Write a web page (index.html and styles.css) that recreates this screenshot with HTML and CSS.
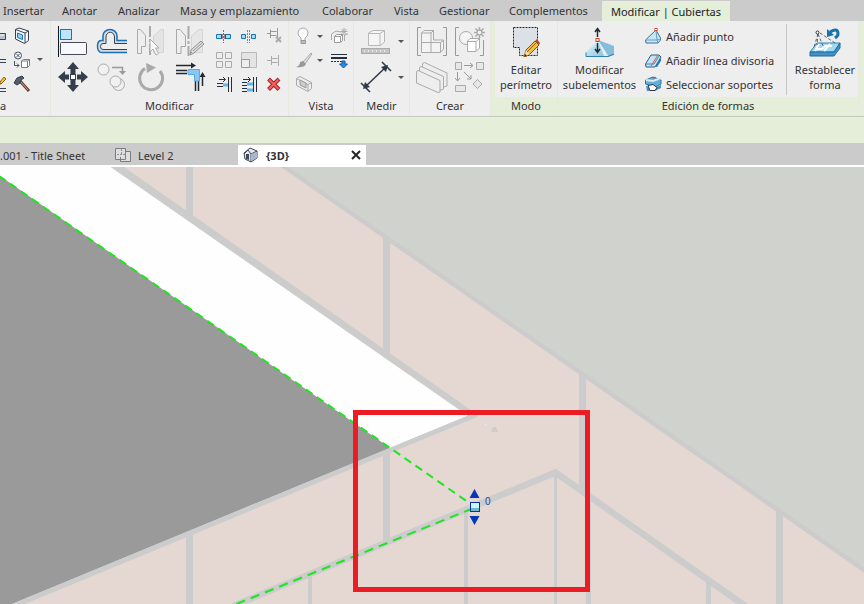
FILE: index.html
```html
<!DOCTYPE html>
<html lang="es">
<head>
<meta charset="utf-8">
<title>Modificar | Cubiertas</title>
<link rel="stylesheet" href="styles.css">
</head>
<body>
<nav class="tabs" aria-label="Cinta">
  <button>Insertar</button><button>Anotar</button><button>Analizar</button><button>Masa y emplazamiento</button><button>Colaborar</button><button>Vista</button><button>Gestionar</button><button>Complementos</button><button class="active">Modificar | Cubiertas</button>
</nav>

<div class="ribbon">
  <section class="panel geometry">
    <div class="tools">
      <div class="small edge">
        <button aria-label="Cortar"><svg viewBox="0 27 7 18"><path d="M0 33.500H5.500V39.500H0" fill="#b9c2ce" stroke="#3b4456"/><path d="M0 35H4" stroke="#fff"/></svg></button>
        <button aria-label="Juntas"><svg viewBox="0 51 7 18"><path d="M0 59.500H6M0 62.500H6" stroke="#39424f"/></svg></button>
        <button aria-label="Pintar"><svg viewBox="0 75 7 18"><path d="M0 82L4 77L6 79L1 84L0 84Z" fill="#ffc51f" stroke="#8a5a1b"/><path d="M0 88.500H6M0 91.500H6" stroke="#39424f"/></svg></button>
      </div>
      <div class="small">
        <button aria-label="Muro"><svg viewBox="14 27 18 18"><path d="M16.500 29.500L20 28L29.500 31V40.500L25.500 43.500L16.500 39Z" fill="#f8fafc" stroke="#354052"/><path d="M16.500 29.500L26 33L29.500 31M26 33V43" fill="none" stroke="#354052"/><path d="M18.500 33L23.500 35V39.500L18.500 37.500Z" fill="#8dd2fa" stroke="#1772b8"/></svg></button>
        <button aria-label="Unir geometría"><svg viewBox="14 51 18 18"><circle cx="19" cy="55.500" r="3.500" fill="#fff" stroke="#4a5261"/><path d="M17 53.500L21 57.500M21 53.500L17 57.500M15.500 61V65.500H20M18 63.500L20 65.500L18 67.500" fill="none" stroke="#4a5261"/><path d="M22.500 61L24.500 59.500H30.500V65.500L28.500 67.500H22.500ZM22.500 61H28.500V67M28.500 61L30.500 59.500" fill="#fff" stroke="#777d88"/></svg></button>
        <button aria-label="Demoler"><svg viewBox="14 75 18 18"><path d="M21 81L30 91" stroke="#673f32" stroke-width="3"/><path d="M21 81L29 90" stroke="#d9a083"/><path d="M15 83L18 78L23 76L25 78L22 80L21 83L18 85Z" fill="#56606c" stroke="#343d49"/></svg></button>
      </div>
      <button class="caret" aria-label="Más opciones de unión"></button>
    </div>
    <h2>a</h2>
  </section>

  <section class="panel modify">
    <div class="tools">
      <div class="large four">
        <button aria-label="Alinear"><svg viewBox="57 25 32 32"><path d="M58.500 26V57" stroke="#111820"/><rect x="60.500" y="29.500" width="11" height="10" fill="#bce5fb" stroke="#1b78ae"/><rect x="60.500" y="42.500" width="26" height="12" rx="1" fill="#f8f8fb" stroke="#454956"/></svg></button>
        <button aria-label="Desfase"><svg viewBox="96 25 32 32" fill="none"><path d="M127 42H116V36A5.500 5 0 0 0 104.500 36V42H102Q99 42 99 46Q99 51 102 51H127" stroke="#d5dce5" stroke-width="3"/><path d="M127 40.500H117V36A7 6.500 0 0 0 103 36V40.500H101Q97.500 41 97.500 46Q97.500 52.500 102 52.500H127" stroke="#1a70b8" stroke-width="1.500"/><path d="M127 43.500H114.500V37A4 4.500 0 0 0 106 37V43.500H103Q100.500 43.500 100.500 46.500Q100.500 49.500 103 49.500H127" stroke="#3a4048"/></svg></button>
        <button aria-label="Simetría por eje"><svg viewBox="135 25 32 32"><path d="M137.500 29.500H140.500L145.500 35.500V46.500H141.500V53.500H137.500Z" fill="#eee" stroke="#aaa"/><path d="M163.500 29.500H161L153.500 36V52.500H163.500Z" fill="#e4e4e4" stroke="#d4d4d4"/><path d="M150 26V56" stroke="#aaa" stroke-width="2" stroke-dasharray="11 2 3 2"/><path d="M150 39V52L153 49L156 55L158.500 53.500L155.500 48H159Z" fill="#fafafa" stroke="#aaa"/></svg></button>
        <button aria-label="Simetría: dibujar eje"><svg viewBox="174 25 32 32"><path d="M176.500 29.500H180L185.500 36V46.500H181V53.500H176.500Z" fill="#eee" stroke="#a7a7a7"/><path d="M202.500 29.500H199L191.500 36V52.500H202.500Z" fill="#e6e6e6" stroke="#d4d4d4"/><path d="M188.500 26V56" stroke="#aaa" stroke-width="2" stroke-dasharray="13 2 3 2"/><path d="M190 55L191 50L201 41L204 44L194 53Z" fill="#ddd" stroke="#909090"/><path d="M191 52L193 54M193 51L202 43" stroke="#999"/></svg></button>
        <button aria-label="Desplazar"><svg viewBox="57 61 32 32" fill="#353e4c"><path d="M73 62L79 69H75.500V74H70.500V69H67ZM73 92L79 85H75.500V80H70.500V85H67ZM58 77L65 71V74.500H69V79.500H65V83ZM88 77L81 71V74.500H77V79.500H81V83Z"/><rect x="70.500" y="74.500" width="5" height="5" fill="#fff" stroke="#353e4c"/></svg></button>
        <button aria-label="Copiar"><svg viewBox="96 61 32 32"><g fill="#f1f1f1" stroke="#aaa"><circle cx="103.500" cy="69.500" r="5.500"/><circle cx="118.500" cy="84.500" r="6"/><circle cx="115.500" cy="81.500" r="5.500"/></g><path d="M112 67.500H122.500V72" fill="none" stroke="#999" stroke-width="1.500"/><path d="M119 71H126L122.500 75Z" fill="#999"/></svg></button>
        <button aria-label="Rotar"><svg viewBox="135 61 32 32"><path d="M145 68.500A11.500 11.500 0 1 0 160 71" fill="none" stroke="#aaa" stroke-width="3"/><path d="M146 63L156 67.500L147 73Z" fill="#aaa"/></svg></button>
        <button aria-label="Recortar"><svg viewBox="174 61 32 32"><path d="M176 65.500H191M176 70.500H187M176 73.500H187M195.500 81V91M198.500 81V91M202.500 86V74" stroke="#222932" stroke-width="1.500"/><path d="M191 62.500L196 65.500L191 68.500ZM199.500 77L202.500 72L205.500 77Z" fill="#222932"/><path d="M188 69.500H199.500V81H194.500V74.500H188Z" fill="#88c8f3" stroke="#58a9df"/></svg></button>
      </div>
      <div class="small three">
        <button aria-label="Dividir"><svg viewBox="215 27 18 18"><path d="M216.500 34.500H221.500V38.500H216.500ZM225.500 34.500H230.500V38.500H225.500Z" fill="#a7dcf8" stroke="#1875b4"/><path d="M223.500 30V43" stroke="#cc4b42" stroke-dasharray="2 1"/><path d="M222 34V39M225 34V39" stroke="#51201e"/></svg></button>
        <button aria-label="Dividir con hueco"><svg viewBox="240 27 18 18"><path d="M241.500 34.500H245.500V38.500H241.500ZM251.500 34.500H255.500V38.500H251.500Z" fill="#a7dcf8" stroke="#1875b4"/><path d="M247.500 30V43M249.500 30V43" stroke="#cc6862" stroke-dasharray="2 1"/></svg></button>
        <button aria-label="Desbloquear"><svg viewBox="265 27 18 18"><path d="M267 33.500H270M270.500 29.500V38M270.500 31.500H276.500M270.500 35.500H276.500M277.500 28V38" fill="none" stroke="#999"/><path d="M276 37L281 42M281 37L276 42" stroke="#aaa" stroke-width="2"/></svg></button>
        <button aria-label="Matriz"><svg viewBox="215 51 18 18"><path d="M216.500 52.500H222.500V58.500H216.500ZM225.500 52.500H231.500V58.500H225.500ZM216.500 61.500H222.500V67.500H216.500ZM225.500 61.500H231.500V67.500H225.500Z" fill="#eee" stroke="#aaa"/></svg></button>
        <button aria-label="Escala"><svg viewBox="240 51 18 18"><path d="M241.500 52.500H256.500V67.500H241.500Z" fill="#e4e4e4" stroke="#b8b8b8"/><path d="M241.500 59.500H249.500V67.500H241.500Z" fill="#eee" stroke="#999"/></svg></button>
        <button aria-label="Bloquear"><svg viewBox="265 51 18 18"><path d="M267 60.500H271M271.500 56V65M271.500 58.500H277.500M271.500 62.500H277.500M278.500 55V66" fill="none" stroke="#aaa"/></svg></button>
        <button aria-label="Alargar elemento"><svg viewBox="215 75 18 18"><path d="M217 86.500H223M217 83.500H223M228.500 77V92M231.500 77V92M219 79.500H225M223 77L225.500 79.500L223 82" fill="none" stroke="#26303c"/><path d="M223 85H228" stroke="#65b4e9" stroke-width="3"/></svg></button>
        <button aria-label="Alargar varios"><svg viewBox="240 75 18 18"><path d="M242 82.500H247M242 85.500H247M242 88.500H247M242 91.500H247M253.500 77V92M256.500 77V92M243 79.500H250M248 77L250.500 79.500L248 82" fill="none" stroke="#26303c"/><path d="M247 84H253M247 90H253" stroke="#65b4e9" stroke-width="3"/></svg></button>
        <button aria-label="Suprimir"><svg viewBox="265 75 18 18"><path d="M268.500 79L279 89.500M279 79L268.500 89.500" stroke="#a81d20" stroke-width="4"/><path d="M269 79.500L278.500 89M278.500 79.500L269 89" stroke="#f4625e" stroke-width="2"/></svg></button>
      </div>
    </div>
    <h2>Modificar</h2>
  </section>

  <section class="panel view">
    <div class="tools">
      <div class="small">
        <button aria-label="Ocultar"><svg viewBox="295 27 18 18"><path d="M301 38Q298 36 298 33A5 5 0 0 1 308 33Q308 36 305 38V41H301Z" fill="#fafafa" stroke="#aaa"/><path d="M301 40.500H305.500V43.500H301Z" fill="#bbb" stroke="#999"/></svg></button>
        <button aria-label="Modificar gráficos"><svg viewBox="295 51 18 18"><path d="M311 53L303 62L305 64L312 54Z" fill="#ddd" stroke="#aaa"/><path d="M296 67Q300 66 300 62L303 61L306 64Q304 68 296 67Z" fill="#999"/></svg></button>
        <button aria-label="Cuadro de selección"><svg viewBox="295 75 18 18"><path d="M296.500 78.500L300 76.500L311.500 82.500V88.500L308 91.500L296.500 85.500ZM296.500 78.500L308 84.500V91M308 84.500L311.500 82.500" fill="#eee" stroke="#aaa"/><path d="M300 80V85L306 88V83Z" fill="#ccc" stroke="#999"/></svg></button>
      </div>
      <div class="carets"><button class="caret" aria-label="Opciones de ocultar"></button><button class="caret" aria-label="Opciones de gráficos"></button></div>
      <div class="small">
        <button aria-label="Desplazar elementos"><svg viewBox="330 27 18 18"><path d="M334.500 36.500L336.500 34.500H342.500V40.500L340.500 42.500H334.500ZM334.500 36.500H340.500V42M340.500 36.500L342.500 34.500" fill="#fff" stroke="#999"/><path d="M331.500 40V34L336 31L341 32M344.500 41V35L348 34" fill="none" stroke="#aaa"/><path d="M344 28V35M340.500 31.500H347.500M341.500 29L346.500 34M346.500 29L341.500 34" stroke="#aaa"/></svg></button>
        <button aria-label="Estilo de línea"><svg viewBox="330 51 18 18"><path d="M331 54.500H347" stroke="#26303c"/><path d="M331 58H347" stroke="#26303c" stroke-width="2"/><path d="M331 61.500H342" stroke="#26303c" stroke-dasharray="2 1"/><path d="M342 61H345V64H347.500L343.500 68L339.500 64H342Z" fill="#278de1" stroke="#1459a6"/></svg></button>
        <span></span>
      </div>
    </div>
    <h2>Vista</h2>
  </section>

  <section class="panel measure">
    <div class="tools">
      <div class="large">
        <button aria-label="Medir"><svg viewBox="360 25 32 32"><path d="M368.500 33L373 30.500H384.500V42L380.500 45.500H368.500ZM368.500 33.500H380V45M380 33.500L384.500 30.500" fill="#f5f5f5" stroke="#b8b8b8"/><rect x="361.500" y="48.500" width="28" height="5" fill="#c5c5c5" stroke="#aaa"/><path d="M364.500 50V52M368.500 50V52M372.500 50V52M376.500 50V52M380.500 50V52M384.500 50V52" stroke="#e7e7e7"/></svg></button>
        <button aria-label="Cota alineada"><svg viewBox="360 61 32 32"><path d="M365 87L387 66M361 83L370 92M382 62L391 71" stroke="#303746" stroke-width="1.500"/><path d="M363 89L365 82L370 87ZM388 65L386 72L381 67Z" fill="#303746"/></svg></button>
      </div>
      <div class="large"><button class="caret" aria-label="Opciones de medir"></button><button class="caret" aria-label="Opciones de cota"></button></div>
    </div>
    <h2>Medir</h2>
  </section>

  <section class="panel create">
    <div class="tools">
      <div class="large two">
        <button aria-label="Crear conjunto"><svg viewBox="416 25 32 32"><path d="M421 27.500H417.500V55.500H421M443 27.500H446.500V55.500H443" fill="none" stroke="#999"/><path d="M421.500 33L424 30.500H433.500V40H443.500V49L440.500 52.500H421.500ZM421.500 42.500H440.500V52M431 33V52M421.500 33H431L433.500 30.500M440.500 42.500L443.500 40.500" fill="#f3f3f3" stroke="#aaa"/></svg></button>
        <button aria-label="Crear grupo"><svg viewBox="455 25 32 32"><path d="M459 27.500H455.500V55.500H459M480 55.500H483.500V40" fill="none" stroke="#999"/><circle cx="466" cy="38" r="6.500" fill="#f4f4f4" stroke="#aaa"/><path d="M467.500 41L470 38.500H479.500V48L476 51.500H467.500ZM467.500 41.500H476V51M476 41.500L479.500 38.500" fill="#fff" stroke="#aaa"/><path d="M479.500 27V38M474 32.500H485M475.500 28.500L483.500 36.500M483.500 28.500L475.500 36.500" stroke="#aaa" stroke-width="1.500"/><circle cx="479.500" cy="32.500" r="2.500" fill="#f0f0f0" stroke="#999"/></svg></button>
        <button aria-label="Crear piezas"><svg viewBox="416 61 32 32"><g fill="#eee" stroke="#aaa"><path d="M422.500 63.500L424.500 62.500L447 73V86L444 87L422.500 77Z"/><path d="M419.500 67.500L421 66.500L443.500 76.500V89L441 90L419.500 80Z"/><path d="M416.500 71.500L418 70.500L440 80.500V92L438 92.500L416.500 83Z"/></g></svg></button>
        <button aria-label="Crear similar"><svg viewBox="455 61 32 32"><path d="M455.500 62.500H461.500V69.500H455.500ZM476.500 62.500H483.500V69.500H476.500ZM455.500 85.500H465.500V91.500H455.500ZM477.500 79.500L482 84L477.500 88.500L473 84Z" fill="#e7e7e7" stroke="#aaa"/><path d="M464 65.500H473M470 63L473 65.500L470 68M457.500 72V81M455 78L457.500 81L460 78M464 72L471 79M471 75V79H467" fill="none" stroke="#999"/></svg></button>
      </div>
    </div>
    <h2>Crear</h2>
  </section>

  <section class="panel mode contextual">
    <div class="tools">
      <button class="command"><svg viewBox="510 25 32 32"><path d="M513.500 27.500H537.500V55.500H519.500V47.500H513.500Z" fill="#dce1e8" stroke="#20242b" stroke-dasharray="2 1"/><path d="M524 57L526 50L535 41L539 45L530 54Z" fill="#f6bf33" stroke="#865119"/><path d="M535 41L537 39L540 43L539 45Z" fill="#aa5135"/><path d="M526 50L530 54L524 57Z" fill="#f8d5a5"/><path d="M524 57L525 54L527 56ZM527 52L537 42" fill="#222" stroke="#8f641d"/></svg><span>Editar<br>perímetro</span></button>
    </div>
    <h2>Modo</h2>
  </section>

  <section class="panel shape contextual">
    <div class="tools">
      <button class="command"><svg viewBox="584 25 32 32"><defs><linearGradient id="roof" x2="1" y2="1"><stop stop-color="#e8f7fc"/><stop offset="1" stop-color="#8cc4e2"/></linearGradient></defs><path d="M586 52L598 40L604 56H586Z" fill="url(#roof)"/><path d="M598 40L614 46V55L608 57Z" fill="#86bddb"/><path d="M586 52L598 41L608 56" fill="none" stroke="#d6f1fb"/><path d="M586 52.500V56.500H608L614 54" fill="none" stroke="#2f80b3"/><path d="M597.500 37V29M595 32L597.500 28.500L600 32M597.500 43V52M595 49L597.500 52.500L600 49" fill="none" stroke="#222c35" stroke-width="1.500"/><rect x="596" y="38.500" width="3" height="3" fill="#fff" stroke="#d43e25"/></svg><span>Modificar<br>subelementos</span></button>
      <div class="rows">
        <button><svg viewBox="645 27 18 18"><path d="M645.500 40L656 30L660.500 38V40L658 43H646Z" fill="#c4e8f7" stroke="#3d7199"/><path d="M656 30L657 40L661 39M645.500 40L657 40L658 43" fill="none" stroke="#6c9cba"/><rect x="655" y="28.500" width="2" height="2" fill="#fff" stroke="#d24434"/></svg>Añadir punto</button>
        <button><svg viewBox="645 51 18 18"><path d="M645.500 64L651 55H659L661 57L655 67H646Z" fill="#c1e3f5" stroke="#315d83"/><path d="M655 67L661 57V61L657 67Z" fill="#297db2"/><path d="M651 66L658 55" stroke="#e6583e"/><path d="M646 64H654L659 56" fill="none" stroke="#54849f"/></svg>Añadir línea divisoria</button>
        <button><svg viewBox="645 75 18 18"><path d="M645.500 80L653 77L661 80V84L655 87L645.500 84Z" fill="#65b0da" stroke="#2d719b"/><path d="M646 80L653 81L661 78" fill="none" stroke="#d6edf6" stroke-width="2"/><path d="M656 77L653 79" fill="none" stroke="#d84d3a"/><path d="M646 86L654 88L661 85V88L655 91H647Z" fill="#4b91bc"/><path d="M648 85.500L653 84.500L657 87.500L655 90.500H650Z" fill="#fff" stroke="#303943"/></svg>Seleccionar soportes</button>
      </div>
      <button class="command reset"><svg viewBox="809 25 32 32"><path d="M810 52L817 43H840L834 52Z" fill="#a2d9f3" stroke="#3185b8"/><path d="M810 52H834L840 43V48L834 56H810Z" fill="#4094c5" stroke="#1d6a9a"/><path d="M815 49H822L825 46H832M819 44L815 51M830 44L824 51" fill="none" stroke="#fff" stroke-width="2"/><path d="M818 34L814 47M818 34L824 48M820 33L835 43M818 34L817 45" stroke="#59616b" stroke-dasharray="3 2"/><circle cx="817.500" cy="32.500" r="1.500" fill="#fff" stroke="#333"/><path d="M830 32Q838 27 838 34Q838 36 835 38" fill="none" stroke="#1870ac" stroke-width="3"/><path d="M827 29V37L834 35Z" fill="#1870ac"/></svg><span>Restablecer<br>forma</span></button>
    </div>
    <h2>Edición de formas</h2>
  </section>
</div>

<div class="options"></div>

<nav class="documents" aria-label="Vistas abiertas">
  <button class="sheet">.001 - Title Sheet</button>
  <button class="level"><svg viewBox="0 0 16 16"><path d="M.500 1.500H10.500V12.500H.500ZM10.500 4.500H15.500V14.500H5.500V10" fill="#dedede" stroke="#777d82"/><path d="M6.500 2V7M2 7.500H11" stroke="#929292" stroke-dasharray="2 1"/></svg>Level 2</button>
  <div class="current"><button><svg viewBox="0 0 16 16"><path d="M1 6L7 1L14 4V11L8 15L2 12Z" fill="#e3eaf0" stroke="#3d4652"/><path d="M1 7L5 3L8 7V15M8 7L14 4" fill="none" stroke="#3d4652"/><path d="M8 7L14 5V11L8 14Z" fill="#a8b7ca"/><path d="M3 7H6V13L3 12Z" fill="#3f4b5a"/></svg>{3D}</button><button class="close" aria-label="Cerrar"><svg viewBox="0 0 10 10"><path d="M1 1L9 9M9 1L1 9" stroke="#252525" stroke-width="2"/></svg></button></div>
</nav>

<main>
  <svg class="model" viewBox="0 167 864 437" preserveAspectRatio="xMinYMin slice" role="img" aria-label="Cubierta en 3D">
    <rect y="167" width="864" height="437" fill="#e5d8d2"/>
    <g fill="#cbcccb">
      <path d="M186 167H193V222H186ZM383 236H390V360H383ZM579 372H586V492H579ZM776 510H783V604H776ZM186 530H193V604H186ZM383 450H390V542H383Z"/>
      <path d="M308 575H312V604H308ZM464 510H468V604H464ZM554 474H557V604H554ZM586 492H591V604H586ZM706 580H711V604H706Z"/>
    </g>
    <path d="M285 167H864V570Z" fill="#d0d3cd"/>
    <path d="M282 165L867 572" stroke="#cbcccb" stroke-width="4.500"/>
    <path d="M0 167H111L468 416L390 448L0 176Z" fill="#fefefe"/>
    <path d="M0 176L390 448L12 604H0Z" fill="#9a9a9a"/>
    <path d="M110.700 167H124L478 415L477 417L25 604H11.700L468 415.500Z" fill="#cbcccb"/>
    <path d="M233 606L555.500 472.500L745 606" fill="none" stroke="#cbcccb" stroke-width="6.500"/>
    <path d="M491 432L493 427H496L498 432Z" fill="#cbcccb"/>
    <path d="M485 424H486V425H485Z" fill="#fff2c8"/>
    <path d="M-1 176L470 503.500" stroke="#1fe41f" stroke-width="2" stroke-dasharray="8 5.350"/>
    <path d="M236.500 604L470 509.500" stroke="#1fe41f" stroke-width="2" stroke-dasharray="9.200 6.150"/>
    <path d="M474.500 489L479.500 498H469.500ZM474.500 525L479.500 516H469.500Z" fill="#0638b5"/>
    <rect x="470.500" y="502.500" width="9" height="9" fill="#c8f6fa" stroke="#06369d"/>
    <path d="M471 508H479V511H471Z" fill="#72b9cf"/>
    <text x="485" y="505" class="elevation">0</text>
    <rect x="355.500" y="412.500" width="232" height="177" fill="none" stroke="#eb1c24" stroke-width="5"/>
  </svg>
</main>
</body>
</html>
```
FILE: styles.css
```css
* { box-sizing: border-box; }
body {
  margin: 0;
  height: 100vh;
  display: flex;
  flex-direction: column;
  overflow: hidden;
  background: #e4eed8;
  color: #333;
  font: 11px/15px "Noto Sans", sans-serif;
}
button {
  padding: 0;
  border: 0;
  background: none;
  color: inherit;
  font: inherit;
  white-space: nowrap;
}
svg { display: block; flex: none; }

.tabs {
  display: grid;
  grid-template-columns: 59px 56px 62px 142px 72px 45px 70px 93px 128px;
  height: 21px;
  padding-left: 3px;
  background: #cbcbcb;
}
.tabs button { text-align: left; }
.tabs .active {
  margin-top: 1px;
  text-align: center;
  background: #e4eed8;
  color: #222;
}

.ribbon {
  display: flex;
  height: 96px;
  border-bottom: 1px solid #c6cac1;
}
.panel {
  display: flex;
  flex-direction: column;
  background: #eee;
  border-right: 1px solid #e6e9df;
}
.panel h2 {
  margin: 0;
  height: 19px;
  line-height: 18px;
  font-size: 11px;
  font-weight: normal;
  text-align: center;
}
.contextual h2 { background: #e4eed8; }
.tools {
  display: flex;
  align-items: flex-end;
  height: 76px;
  padding-bottom: 4px;
}
.small {
  display: grid;
  grid-template-rows: repeat(3, 18px);
  gap: 6px 7px;
}
.small svg { width: 18px; height: 18px; }
.edge svg { width: 7px; }
.three { grid-template-columns: repeat(3, 18px); }
.large {
  display: grid;
  grid-template-rows: repeat(2, 32px);
  gap: 4px 7px;
}
.large svg, .command svg { width: 32px; height: 32px; }
.two { grid-template-columns: repeat(2, 32px); }
.four { grid-template-columns: repeat(4, 32px); }
.caret::before {
  content: "";
  display: block;
  border: 3px solid transparent;
  border-top-color: #555;
  border-bottom: 0;
}
.carets {
  display: grid;
  grid-template-rows: repeat(2, 18px);
  gap: 6px;
  align-self: flex-start;
  padding-top: 6px;
}

.geometry { width: 51px; }
.geometry .tools { gap: 6px; }
.panel.geometry h2 { text-align: left; }
.geometry .caret { align-self: center; padding-top: 5px; }
.modify { width: 238px; }
.modify .tools { padding-left: 6px; gap: 9px; }
.view { width: 65px; }
.view .tools { padding-left: 6px; gap: 4px; }
.carets + .small { margin-left: 3px; }
.measure { width: 56px; }
.measure .tools { padding-left: 6px; gap: 6px; }
.create { width: 81px; }
.create .tools { padding-left: 6px; }
.mode { width: 63px; margin-left: 4px; }
.mode .tools { justify-content: center; }
.shape { width: 301px; }
.shape .tools { align-items: stretch; padding-bottom: 0; }

.command {
  display: flex;
  flex-direction: column;
  align-items: center;
  align-self: stretch;
  gap: 5px;
  padding-top: 4px;
}
.shape .command { flex: 0 0 83px; }
.shape .reset {
  flex: 1;
  margin: 3px 0 2px;
  padding: 1px 0 0 5px;
  border-left: 1px solid #c8c8c8;
}
.rows {
  display: grid;
  grid-template-rows: repeat(3, 18px);
  gap: 6px;
  flex: 0 0 145px;
  padding: 6px 0 0 4px;
}
.rows button { display: flex; align-items: center; gap: 3px; }
.rows svg { width: 18px; height: 18px; }

.options { height: 26px; }
.documents {
  display: flex;
  align-items: stretch;
  height: 24px;
  padding-top: 2px;
  background: #cbcbcb;
  border-bottom: 2px solid #fff;
}
.documents svg { width: 16px; height: 16px; }
.sheet { width: 115px; text-align: left; }
.level { width: 123px; }
.level, .current, .current button { display: flex; align-items: center; gap: 7px; }
.current {
  width: 128px;
  justify-content: space-between;
  padding: 0 5px;
  background: #fff;
  font-weight: bold;
}
.documents .close svg { width: 10px; height: 10px; }

main { flex: 1; min-height: 0; }
.model { width: 100%; height: 100%; }
.elevation { font: 10px "Liberation Sans", sans-serif; fill: #2347a7; }
```
